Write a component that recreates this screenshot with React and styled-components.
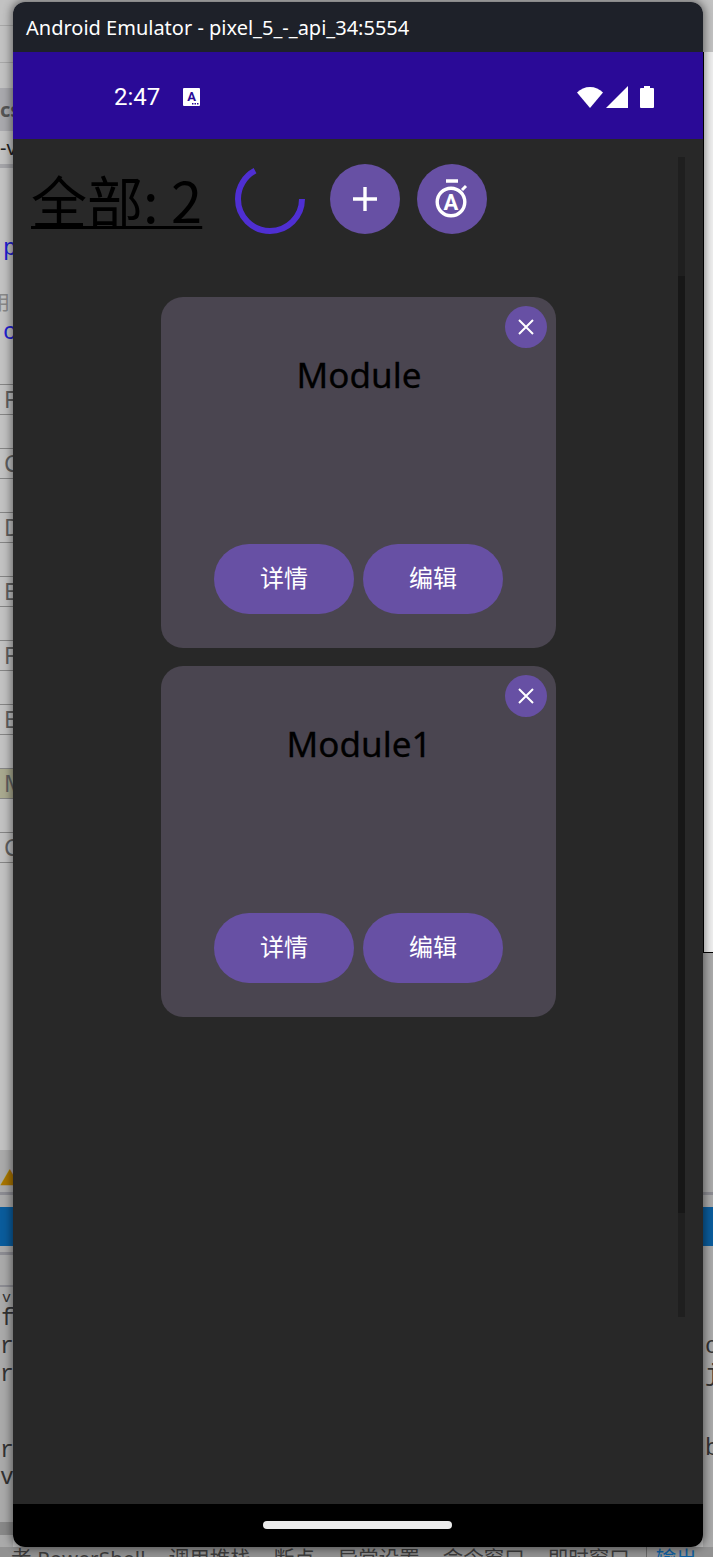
import styled, { createGlobalStyle } from "styled-components";

const GlobalStyle = createGlobalStyle`
  html, body {
    margin: 0;
    padding: 0;
    background: #c9c9c9;
  }
`;

const CJK = `"Noto Sans", "Noto Sans CJK SC", sans-serif`;

const Desktop = styled.div`
  position: relative;
  width: 713px;
  height: 1557px;
  overflow: hidden;
  display: flex;
  flex-direction: column;
  font-family: ${CJK};
`;

// the IDE behind the emulator, only its edges show
const Backdrop = styled.div`
  height: 1547px;
  flex: none;
  display: flex;
  justify-content: space-between;
  background: #c2c2c2;
`;

const Rail = styled.div`
  width: ${(p) => p.$w}px;
  height: 100%;
  display: flex;
  flex-direction: column;
  overflow: hidden;
`;

const RailRow = styled.div`
  height: ${(p) => p.$h}px;
  flex: none;
  display: flex;
  align-items: center;
  background: ${(p) => p.$bg || "transparent"};
  padding-left: ${(p) => p.$indent || 0}px;
  font-family: ${(p) => (p.$mono ? `"Liberation Mono", monospace` : CJK)};
  font-size: ${(p) => p.$size || 20}px;
  font-weight: ${(p) => (p.$bold ? 700 : 400)};
  line-height: 1;
  color: ${(p) => p.$color || "#333"};
  white-space: nowrap;
`;

const HalfGlyph = styled.span`
  margin-left: -10px;
`;

const TabBox = styled.div`
  height: 31px;
  flex: none;
  margin-bottom: 33px;
  box-sizing: border-box;
  border-top: 1px solid #858585;
  border-bottom: 1px solid #858585;
  background: ${(p) => (p.$active ? "#a9a98f" : "transparent")};
  color: #5f5f5f;
  font-size: 23px;
  line-height: 29px;
  padding-left: 4px;
`;

const LowerRail = styled.div`
  flex: 1;
  display: flex;
  flex-direction: column;
  background: #aaaaaa;
`;

const RightPane = styled.div`
  height: 901px;
  flex: none;
  box-sizing: border-box;
  background: #efefef;
  border-left: 1px solid #000;
  border-bottom: 1px solid #000;
`;

const BottomTabs = styled.div`
  height: 10px;
  flex: none;
  background: #929292;
  display: flex;
  gap: 23px;
  padding-left: 11px;
  font-size: 20.5px;
  line-height: 22px;
  color: #3c3c3c;
  white-space: nowrap;
  overflow: hidden;
`;

const ShellTab = styled.span`
  letter-spacing: 0.2px;
`;

const OutputTab = styled.span`
  color: #0f5f9f;
  margin-left: -7px;
  padding-left: 9px;
  border-left: 1px solid #666;
`;

const EmulatorWindow = styled.div`
  position: absolute;
  left: 13px;
  top: 2px;
  width: 690px;
  height: 1545px;
  display: flex;
  flex-direction: column;
  border-radius: 12px;
  overflow: hidden;
  box-shadow: 0 0 9px 2px rgba(0, 0, 0, 0.45);
`;

const TitleBar = styled.div`
  height: 50px;
  flex: none;
  background: #1e2129;
  color: #fff;
  font-size: 20px;
  line-height: 52px;
  padding-left: 13px;
`;

const StatusBar = styled.div`
  height: 87px;
  flex: none;
  box-sizing: border-box;
  background: #2a0a97;
  color: #fff;
  display: flex;
  align-items: center;
  padding: 3px 49px 0 101px;
`;

const Clock = styled.span`
  font-family: Roboto, sans-serif;
  font-size: 24px;
  width: 69px;
`;

const StatusIcons = styled.div`
  margin-left: auto;
  display: flex;
  align-items: center;
  gap: 3px;
`;

const Screen = styled.div`
  position: relative;
  flex: 1;
  background: #282828;
  padding: 25px 0 0 18px;
`;

const ScrollTrack = styled.div`
  position: absolute;
  top: 18px;
  left: 665px;
  width: 7px;
  height: 1160px;
  background: #1f1f1f;
`;

const ScrollThumb = styled.div`
  margin-top: 119px;
  height: 937px;
  background: #171717;
`;

const Header = styled.div`
  display: flex;
  align-items: center;
`;

const Total = styled.span`
  font-family: "Noto Sans CJK SC", sans-serif;
  font-weight: 400;
  font-size: 56px;
  line-height: 70px;
  color: #000;
  text-decoration: underline;
  text-decoration-thickness: 3px;
  text-underline-offset: 3px;
  margin-right: 34px;
  width: 170px;
  white-space: nowrap;
`;

const Spinner = styled.svg`
  width: 70px;
  height: 70px;
  margin-right: 25px;
  flex: none;
`;

const RoundButton = styled.button`
  width: ${(p) => p.$size}px;
  height: ${(p) => p.$size}px;
  border: 0;
  border-radius: 50%;
  padding: 0;
  flex: none;
  background: #6750a4;
  display: flex;
  align-items: center;
  justify-content: center;
  margin-right: ${(p) => p.$gap || 0}px;
`;

const CardList = styled.div`
  display: flex;
  flex-direction: column;
  align-items: center;
  gap: 18px;
  margin: 63px 0 0 -18px;
`;

const Card = styled.div`
  position: relative;
  width: 395px;
  height: 351px;
  box-sizing: border-box;
  border-radius: 22px;
  background: #4a4550;
  display: flex;
  flex-direction: column;
  align-items: center;
`;

const CloseButton = styled(RoundButton)`
  position: absolute;
  top: 9px;
  right: 9px;
`;

const CardTitle = styled.div`
  margin: 53px 0 0 2px;
  font-size: 35px;
  line-height: 50px;
  color: #000;
  -webkit-text-stroke: 0.3px #000;
`;

const CardActions = styled.div`
  margin-top: auto;
  margin-bottom: 34px;
  margin-left: 1px;
  display: flex;
  gap: 9px;
`;

const PillButton = styled.button`
  width: 140px;
  height: 70px;
  border: 0;
  border-radius: 35px;
  background: #6750a4;
  color: #fff;
  font-family: ${CJK};
  font-size: 24px;
  padding: 0 0 5px;
`;

const NavBar = styled.div`
  height: 43px;
  flex: none;
  background: #000;
  display: flex;
  justify-content: center;
  padding: 17px 1px 0 0;
  box-sizing: border-box;
`;

const HomeHandle = styled.div`
  width: 189px;
  height: 8px;
  border-radius: 4px;
  background: #ececec;
`;

const tabLetters = ["F", "C", "D", "E", "F", "E", "M", "C"];
const modules = ["Module", "Module1"];
const LINE = "#8c8c92";
const BLUE = "#0a5c9c";

const NotifyIcon = () => (
  <svg width="17" height="18" viewBox="0 0 17 18">
    <rect width="17" height="18" rx="1" fill="#fff" />
    <text x="8.5" y="13" textAnchor="middle" fontFamily="Roboto, sans-serif" fontWeight="700" fontSize="13" fill="#2a0a97">
      A
    </text>
    <rect x="9" y="15" width="1.5" height="1.5" fill="#2a0a97" />
    <rect x="11.5" y="15" width="1.5" height="1.5" fill="#2a0a97" />
    <rect x="14" y="15" width="1.5" height="1.5" fill="#2a0a97" />
  </svg>
);

const WifiIcon = () => (
  <svg width="26" height="21" viewBox="0 0 26 21">
    <path d="M0 5.5C3.5 2 8 0 13 0s9.500 2 13 5.500L13 21z" fill="#fff" />
  </svg>
);

const SignalIcon = () => (
  <svg width="22" height="22" viewBox="0 0 22 22">
    <path d="M22 0v22H0z" fill="#fff" />
  </svg>
);

const BatteryIcon = () => (
  <svg width="14" height="22" viewBox="0 0 14 22" style={{ marginLeft: 9 }}>
    <path d="M4 0h6v2h3a1 1 0 0 1 1 1v18a1 1 0 0 1-1 1H1a1 1 0 0 1-1-1V3a1 1 0 0 1 1-1h3z" fill="#fff" />
  </svg>
);

const PlusIcon = () => (
  <svg width="26" height="26" viewBox="0 0 26 26">
    <path d="M13 1v24M1 13h24" stroke="#fff" strokeWidth="3.400" fill="none" />
  </svg>
);

const CloseIcon = () => (
  <svg width="16" height="16" viewBox="0 0 16 16">
    <path d="M1 1l14 14M15 1L1 15" stroke="#fff" strokeWidth="2" fill="none" />
  </svg>
);

const TimerAutoIcon = () => (
  <svg width="36" height="40" viewBox="0 0 36 40">
    <path d="M12 2h12" stroke="#fff" strokeWidth="3.400" fill="none" />
    <circle cx="17" cy="23" r="13.800" stroke="#fff" strokeWidth="3.400" fill="none" />
    <path d="M28 11l4-4" stroke="#fff" strokeWidth="3" fill="none" />
    <text x="17" y="31" textAnchor="middle" fontFamily="Roboto, sans-serif" fontWeight="700" fontSize="22" fill="#fff">
      A
    </text>
  </svg>
);

const App = () => {
  return (
    <Desktop>
      <GlobalStyle />

      <Backdrop>
        <Rail $w={13}>
          <RailRow $h={25} />
          <RailRow $h={1} $bg="#a8a8a8" />
          <RailRow $h={36} />
          <RailRow $h={1} $bg="#a8a8a8" />
          <RailRow $h={25} />
          <RailRow $h={43} $bg="#a9a9ad" $bold $color="#555">cs</RailRow>
          <RailRow $h={33} $color="#222">-v</RailRow>
          <RailRow $h={4} $bg="#a4a4a8" />
          <RailRow $h={67} />
          <RailRow $h={28} $mono $size={23} $indent={3} $color="#2020d0">p</RailRow>
          <RailRow $h={30} />
          <RailRow $h={20} $color="#888"><HalfGlyph>用</HalfGlyph></RailRow>
          <RailRow $h={10} />
          <RailRow $h={20} $mono $size={23} $indent={3} $color="#2020d0">c</RailRow>
          <RailRow $h={41} />
          {tabLetters.map((letter, i) => (
            <TabBox key={i} $active={letter === "M"}>
              {letter}
            </TabBox>
          ))}
          <RailRow $h={254} />
          <LowerRail>
            <RailRow $h={19} />
            <RailRow $h={20} $color="#a87400">▲</RailRow>
            <RailRow $h={3} />
            <RailRow $h={3} $bg={LINE} />
            <RailRow $h={12} />
            <RailRow $h={39} $bg={BLUE} />
            <RailRow $h={6} />
            <RailRow $h={3} $bg={LINE} />
            <RailRow $h={30} />
            <RailRow $h={2} $bg={LINE} />
            <RailRow $h={4} />
            <RailRow $h={14} $mono $size={15} $indent={2}>v</RailRow>
            <RailRow $h={28} $mono $size={23} $indent={1}>f</RailRow>
            <RailRow $h={28} $mono $size={23}>r</RailRow>
            <RailRow $h={28} $mono $size={23}>r</RailRow>
            <RailRow $h={49} />
            <RailRow $h={26} $mono $size={23}>r</RailRow>
            <RailRow $h={28} $mono $size={23}>v</RailRow>
            <RailRow $h={30} />
            <RailRow $h={13} $bg="#888888" />
          </LowerRail>
        </Rail>

        <Rail $w={10}>
          <RailRow $h={52} />
          <RightPane />
          <LowerRail>
            <RailRow $h={239} />
            <RailRow $h={3} $bg={LINE} />
            <RailRow $h={12} />
            <RailRow $h={39} $bg={BLUE} />
            <RailRow $h={87} />
            <RailRow $h={28} $mono $size={23} $indent={2}>o</RailRow>
            <RailRow $h={28} $mono $size={23} $indent={2}>j</RailRow>
            <RailRow $h={46} />
            <RailRow $h={28} $mono $size={23} $indent={2}>b</RailRow>
          </LowerRail>
        </Rail>
      </Backdrop>

      <BottomTabs>
        <ShellTab>者 PowerShell</ShellTab>
        <span>调用堆栈</span>
        <span>断点</span>
        <span>异常设置</span>
        <span>命令窗口</span>
        <span>即时窗口</span>
        <OutputTab>输出</OutputTab>
      </BottomTabs>

      <EmulatorWindow>
        <TitleBar>Android Emulator - pixel_5_-_api_34:5554</TitleBar>
        <StatusBar>
          <Clock>2:47</Clock>
          <NotifyIcon />
          <StatusIcons>
            <WifiIcon />
            <SignalIcon />
            <BatteryIcon />
          </StatusIcons>
        </StatusBar>

        <Screen>
          <ScrollTrack>
            <ScrollThumb />
          </ScrollTrack>

          <Header>
            <Total>全部: 2</Total>
            <Spinner viewBox="0 0 70 70">
              <circle
                cx="35"
                cy="35"
                r="32"
                fill="none"
                stroke="#4f2fd2"
                strokeWidth="6"
                strokeDasharray="135 201"
              />
            </Spinner>
            <RoundButton $size={70} $gap={17}>
              <PlusIcon />
            </RoundButton>
            <RoundButton $size={70}>
              <TimerAutoIcon />
            </RoundButton>
          </Header>

          <CardList>
            {modules.map((name) => (
              <Card key={name}>
                <CloseButton $size={42}>
                  <CloseIcon />
                </CloseButton>
                <CardTitle>{name}</CardTitle>
                <CardActions>
                  <PillButton>详情</PillButton>
                  <PillButton>编辑</PillButton>
                </CardActions>
              </Card>
            ))}
          </CardList>
        </Screen>

        <NavBar>
          <HomeHandle />
        </NavBar>
      </EmulatorWindow>
    </Desktop>
  );
};

export default App;
